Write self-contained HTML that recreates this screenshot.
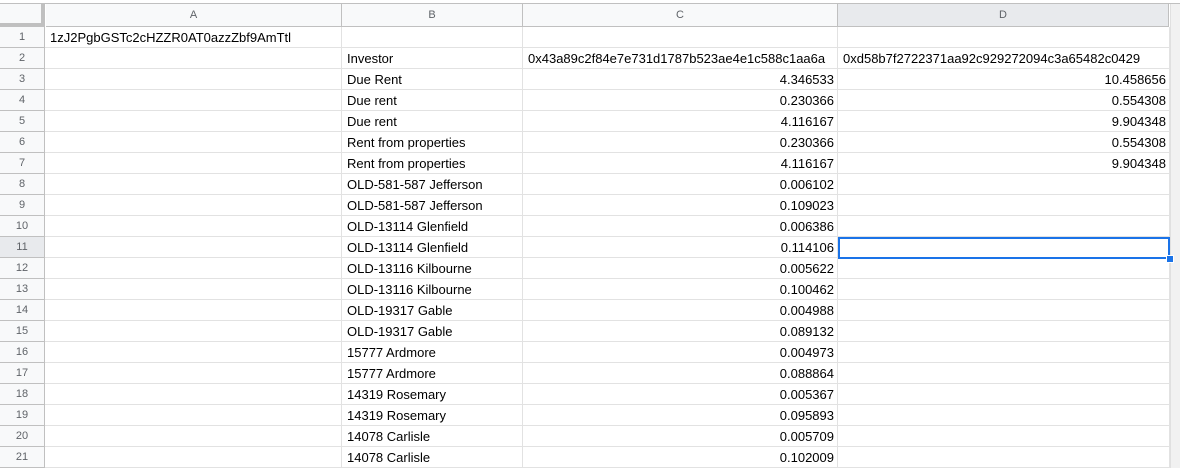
<!DOCTYPE html><html><head><style>
body{margin:0;width:1180px;height:468px;overflow:hidden;background:#fff;font-family:"Liberation Sans",Arial,sans-serif;font-size:13px;color:#000;position:relative}
.top{position:absolute;left:0;top:0;width:1180px;height:3px;background:#fff;border-bottom:1px solid #c0c0c0}
.hd{position:absolute;top:4px;height:22px;background:#f8f9fa;border-right:1px solid #c0c0c0;border-bottom:1px solid #c0c0c0;text-align:center;line-height:22px;color:#5f6368;font-size:11px;box-sizing:content-box}
.rn{position:absolute;left:0;width:44px;height:20px;background:#f8f9fa;border-right:1px solid #c0c0c0;border-bottom:1px solid #c0c0c0;text-align:center;line-height:21px;color:#5f6368;font-size:11px}
.c{position:absolute;height:20px;border-right:1px solid #e2e2e2;border-bottom:1px solid #e2e2e2;line-height:22px;padding:0 4px 0 5px;box-sizing:border-box;white-space:nowrap;overflow:hidden}
.r{text-align:right;padding-right:3px}
</style></head><body>
<div class="top"></div>
<div class="hd" style="left:0;width:41px;border-right:4px solid #c0c0c0;border-bottom:4px solid #c0c0c0;height:19px"></div>
<div class="hd" style="left:46px;width:295px">A</div>
<div class="hd" style="left:342px;width:180px">B</div>
<div class="hd" style="left:523px;width:314px">C</div>
<div class="hd" style="left:838px;width:330px;background:#e8eaed">D</div>
<div style="position:absolute;left:1170px;top:4px;width:10px;height:464px;background:#f1f1f1;border-left:1px solid #e0e0e0"></div>
<div id="g"></div>
<script>
var B=["","Investor","Due Rent","Due rent","Due rent","Rent from properties","Rent from properties","OLD-581-587 Jefferson","OLD-581-587 Jefferson","OLD-13114 Glenfield","OLD-13114 Glenfield","OLD-13116 Kilbourne","OLD-13116 Kilbourne","OLD-19317 Gable","OLD-19317 Gable","15777 Ardmore","15777 Ardmore","14319 Rosemary","14319 Rosemary","14078 Carlisle","14078 Carlisle"];
var C=["","0x43a89c2f84e7e731d1787b523ae4e1c588c1aa6a","4.346533","0.230366","4.116167","0.230366","4.116167","0.006102","0.109023","0.006386","0.114106","0.005622","0.100462","0.004988","0.089132","0.004973","0.088864","0.005367","0.095893","0.005709","0.102009"];
var D=["","0xd58b7f2722371aa92c929272094c3a65482c0429","10.458656","0.554308","9.904348","0.554308","9.904348"];
var h="";
for(var i=0;i<21;i++){var y=27+i*21;
h+='<div class="rn" style="top:'+y+'px;'+(i==10?'background:#e8eaed;':'')+'">'+(i+1)+'</div>';
h+='<div class="c" style="left:45px;width:297px;top:'+y+'px;height:21px">'+(i==0?'1zJ2PgbGSTc2cHZZR0AT0azzZbf9AmTtl':'')+'</div>';
h+='<div class="c" style="left:342px;width:181px;top:'+y+'px;height:21px">'+B[i]+'</div>';
h+='<div class="c'+(i>1?' r':'')+'" style="left:523px;width:315px;top:'+y+'px;height:21px">'+C[i]+'</div>';
h+='<div class="c'+(i>1?' r':'')+'" style="left:838px;width:332px;top:'+y+'px;height:21px">'+(D[i]||'')+'</div>';}
h+='<div style="position:absolute;left:838px;top:237px;width:328px;height:18px;border:2px solid #1a73e8"></div>';
h+='<div style="position:absolute;left:1166px;top:255px;width:6px;height:6px;background:#1a73e8;border:1px solid #fff"></div>';
document.getElementById('g').innerHTML=h;
</script>
</body></html>
